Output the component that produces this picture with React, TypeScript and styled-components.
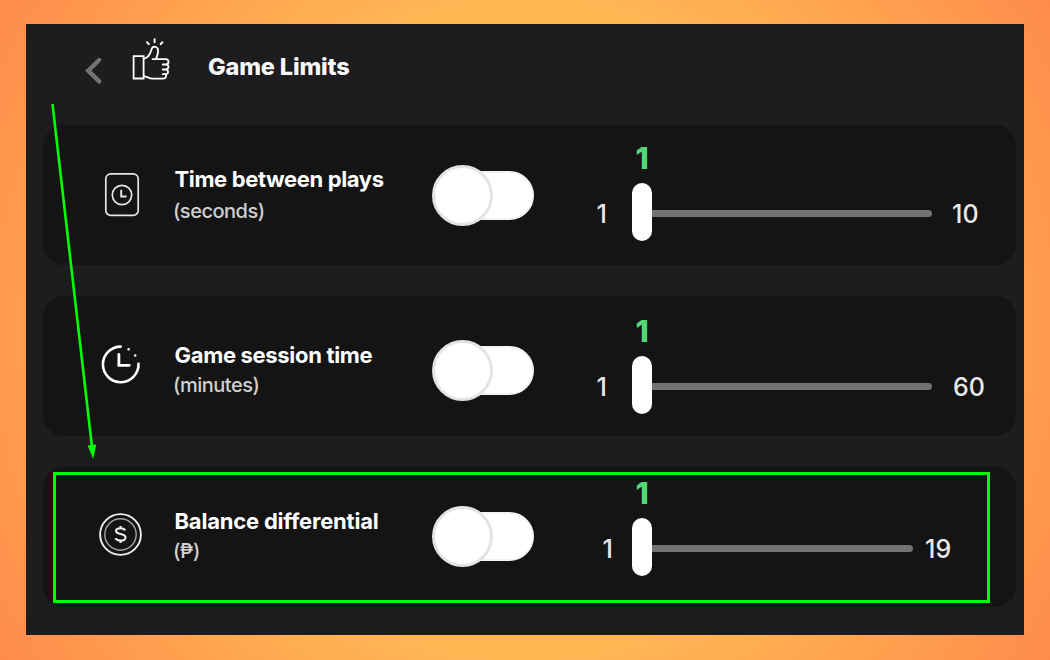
import styled, { createGlobalStyle } from "styled-components";

interface LimitProps {
  icon: "card" | "session" | "coin";
  name: string;
  unit: string;
  max: number;
  nameSpacing: number;
  unitSpacing: number;
  textTop: number;
  unitGap: number;
  switchTop: number;
  iconTop: number;
  sliderTop: number;
  minGap: number;
  railWidth: number;
  maxGap: number;
}

const limitData: LimitProps[] = [
  {
    icon: "card",
    name: "Time between plays",
    unit: "(seconds)",
    max: 10,
    nameSpacing: -0.37,
    unitSpacing: -0.5,
    textTop: 39,
    unitGap: 2,
    switchTop: 40,
    iconTop: 46,
    sliderTop: 18,
    minGap: 25,
    railWidth: 280,
    maxGap: 20,
  },
  {
    icon: "session",
    name: "Game session time",
    unit: "(minutes)",
    max: 60,
    nameSpacing: -0.32,
    unitSpacing: -0.5,
    textTop: 44,
    unitGap: 0,
    switchTop: 44,
    iconTop: 44,
    sliderTop: 20,
    minGap: 25,
    railWidth: 280,
    maxGap: 21,
  },
  {
    icon: "coin",
    name: "Balance differential",
    unit: "(₱)",
    max: 19,
    nameSpacing: -0.2,
    unitSpacing: -0.5,
    textTop: 39,
    unitGap: 0,
    switchTop: 39,
    iconTop: 44,
    sliderTop: 11,
    minGap: 19,
    railWidth: 261,
    maxGap: 12,
  },
];

const LimitIcon = ({ type }: { type: LimitProps["icon"] }) => {
  if (type === "card") {
    return (
      <svg width="46" height="46" viewBox="0 0 46 46" fill="none" stroke="#e6e6e6">
        <rect x="8.8" y="2.8" width="32.4" height="41.6" rx="5" strokeWidth="1.7" />
        <circle cx="25" cy="24" r="9.7" strokeWidth="1.7" />
        <path d="M24.2 18.8V25.5H29.5" strokeWidth="1.9" />
      </svg>
    );
  }
  if (type === "session") {
    return (
      <svg width="46" height="46" viewBox="1 0 46 46" fill="none" stroke="#fff" strokeLinecap="round">
        <path d="M24.7 6.6A17.8 17.8 0 1 0 42.5 23.8" strokeWidth="2.6" />
        <path d="M22.9 14.3V25.3H33.3" strokeWidth="2.8" />
        <circle cx="32.6" cy="9.2" r="1.2" fill="#fff" stroke="none" />
        <circle cx="39.2" cy="15.5" r="1.2" fill="#fff" stroke="none" />
      </svg>
    );
  }
  return (
    <svg width="46" height="46" viewBox="0 0 46 46" fill="none" stroke="#eee">
      <circle cx="23.5" cy="23.5" r="20.4" strokeWidth="1.9" />
      <circle cx="23.5" cy="23.5" r="15.7" strokeWidth="1.4" stroke="#a5a5a5" />
      <path
        d="M28.4 19.2C27.2 17.9 25.4 17.3 23.4 17.3C20.7 17.3 19 18.4 19 20.1C19 24.3 28.5 21.8 28.5 26.5C28.5 28.4 26.5 29.6 23.7 29.6C21.3 29.6 19.3 28.8 18.2 27.4M23.5 15V17.3M23.5 29.6V32"
        strokeWidth="2.1"
      />
    </svg>
  );
};

const ThumbIcon = () => (
  <svg width="40" height="46" viewBox="0.8 0 40 46" fill="none" stroke="#fff" strokeWidth="1.8" strokeLinejoin="round" strokeLinecap="round">
    <path d="M2.4 18.2H12.4V40.5H2.4Z" strokeLinejoin="miter" />
    <path d="M12.8 20.6C16.4 19.9 18.8 16.4 20 12.2C20.6 9.8 21.1 8.6 23.2 8.6C26.6 8.8 27.2 11.4 26.8 14.2C26.5 17.1 25.3 19.2 24.9 20.7" />
    <path d="M21.4 21.1H34.5C38.2 21.4 38.3 26 34.7 26.5H31.5M34.7 26.5C38.3 27 38 31.2 34.6 31.5H31.5M34.6 31.5C37.8 32.2 37.5 36 34.4 36.2H31.5M34.4 36.2C35.7 37.8 34.7 40.6 32 40.7H21.5C18 40.6 16 38.7 12.8 38.2" />
    <path d="M15.8 4.3L17.6 6.1M23.4 1.2V4.3M31.2 4.3L29.4 6.1" strokeWidth="2" />
  </svg>
);

export default function App() {
  return (
    <Page>
      <GlobalStyle />
      <Panel>
        <Header>
          <BackButton aria-label="Back">
            <svg width="20" height="30" viewBox="0 0 20 30" fill="none" stroke="#737373" strokeWidth="4.4">
              <path d="M16.2 4L5.2 14.7L16.2 25.4" strokeLinecap="round" />
            </svg>
          </BackButton>
          <ThumbIcon />
          <Title>Game Limits</Title>
        </Header>
        <LimitList>
          {limitData.map((el: LimitProps) => (
            <LimitCard key={el.name}>
              <IconBox $top={el.iconTop}>
                <LimitIcon type={el.icon} />
              </IconBox>
              <Label $top={el.textTop}>
                <Name $spacing={el.nameSpacing}>{el.name}</Name>
                <Unit $gap={el.unitGap} $spacing={el.unitSpacing}>
                  {el.unit}
                </Unit>
              </Label>
              <Switch $top={el.switchTop} role="switch" aria-checked={false}>
                <Knob />
                <SwitchTrack />
              </Switch>
              <Slider $top={el.sliderTop}>
                <Value>1</Value>
                <Rail>
                  <Min $gap={el.minGap}>1</Min>
                  <Handle />
                  <Track $width={el.railWidth} />
                  <Max $gap={el.maxGap}>{el.max}</Max>
                </Rail>
              </Slider>
            </LimitCard>
          ))}
        </LimitList>
      </Panel>
      <Highlight />
      <Arrow width="60" height="370" viewBox="0 0 60 370">
        <path d="M12.5 4L52 347" stroke="#00ff00" strokeWidth="2.6" />
        <path d="M47.6 345.5L56.2 344.5L53.3 359Z" fill="#00ff00" />
      </Arrow>
    </Page>
  );
}

const GlobalStyle = createGlobalStyle`
  * {
    box-sizing: border-box;
  }
  body {
    margin: 0;
    font-family: Inter, "Open Sans", sans-serif;
    color: #fff;
  }
`;

const Page = styled.div`
  position: relative;
  width: 1050px;
  height: 660px;
  padding: 24px 26px 25px;
  overflow: hidden;
  background: radial-gradient(circle farthest-corner, #ffb653 53%, #ff8b4b 100%);
`;

const Panel = styled.div`
  width: 998px;
  height: 611px;
  background: #1d1d1f;
`;

const Header = styled.div`
  display: flex;
  align-items: flex-start;
  height: 101px;
  padding: 14px 0 0 57px;
`;

const BackButton = styled.button`
  display: flex;
  width: 49px;
  padding: 18px 0 0;
  border: 0;
  background: none;
`;

const Title = styled.h1`
  margin: 14px 0 0 36px;
  font-size: 23.5px;
  line-height: 30px;
  font-weight: 800;
  letter-spacing: -0.15px;
  color: #f8f8f8;
`;

const LimitList = styled.div`
  display: flex;
  flex-direction: column;
  gap: 31px;
  padding-left: 17px;
`;

const LimitCard = styled.div`
  display: flex;
  align-items: flex-start;
  width: 973px;
  height: 140px;
  border-radius: 21px;
  background: #141414;
`;

const IconBox = styled.div<{ $top: number }>`
  display: flex;
  width: 131px;
  padding: ${({ $top }) => $top}px 0 0 54px;
`;

const Label = styled.div<{ $top: number }>`
  width: 258px;
  padding-top: ${({ $top }) => $top}px;
  white-space: nowrap;
`;

const Name = styled.h2<{ $spacing: number }>`
  margin: 0 0 0 0.5px;
  font-size: 22px;
  line-height: 30px;
  font-weight: 750;
  letter-spacing: ${({ $spacing }) => $spacing}px;
`;

const Unit = styled.p<{ $gap: number; $spacing: number }>`
  margin: ${({ $gap }) => $gap}px 0 0 -1px;
  font-size: 20px;
  line-height: 30px;
  font-weight: 500;
  color: #d0d0d0;
  letter-spacing: ${({ $spacing }) => $spacing}px;
`;

const Switch = styled.div<{ $top: number }>`
  display: flex;
  align-items: center;
  width: 102px;
  height: 61px;
  margin-top: ${({ $top }) => $top}px;
`;

const Knob = styled.div`
  z-index: 1;
  flex: none;
  width: 61px;
  height: 61px;
  border: 3px solid #e3e3e3;
  border-radius: 50%;
  background: #fff;
`;

const SwitchTrack = styled.div`
  flex: none;
  width: 80px;
  height: 49px;
  margin-left: -39px;
  border: 2px solid #f3f3f3;
  border-radius: 25px;
  background: #fff;
`;

const Slider = styled.div<{ $top: number }>`
  padding-top: ${({ $top }) => $top}px;
`;

const Value = styled.div`
  width: 20px;
  margin: 0 0 10px 98px;
  font-size: 30px;
  line-height: 30px;
  font-weight: 800;
  text-align: center;
  color: #54d876;
`;

const Rail = styled.div`
  display: flex;
  align-items: center;
  height: 58px;
  font-size: 25px;
  line-height: 30px;
  font-weight: 500;
  color: #e8e8e8;
`;

const Min = styled.span<{ $gap: number }>`
  width: 98px;
  padding: 3px ${({ $gap }) => $gap}px 0 0;
  text-align: right;
`;

const Handle = styled.div`
  width: 20px;
  height: 58px;
  border-radius: 10px;
  background: #fff;
`;

const Track = styled.div<{ $width: number }>`
  width: ${({ $width }) => $width}px;
  height: 7px;
  margin-top: 3px;
  border-radius: 0 4px 4px 0;
  background: #737373;
`;

const Max = styled.span<{ $gap: number }>`
  padding: 3px 0 0 ${({ $gap }) => $gap}px;
`;

const Highlight = styled.div`
  position: absolute;
  top: 472px;
  left: 53px;
  width: 937px;
  height: 131px;
  border: 3px solid #00ff00;
`;

const Arrow = styled.svg`
  position: absolute;
  top: 100px;
  left: 40px;
`;
